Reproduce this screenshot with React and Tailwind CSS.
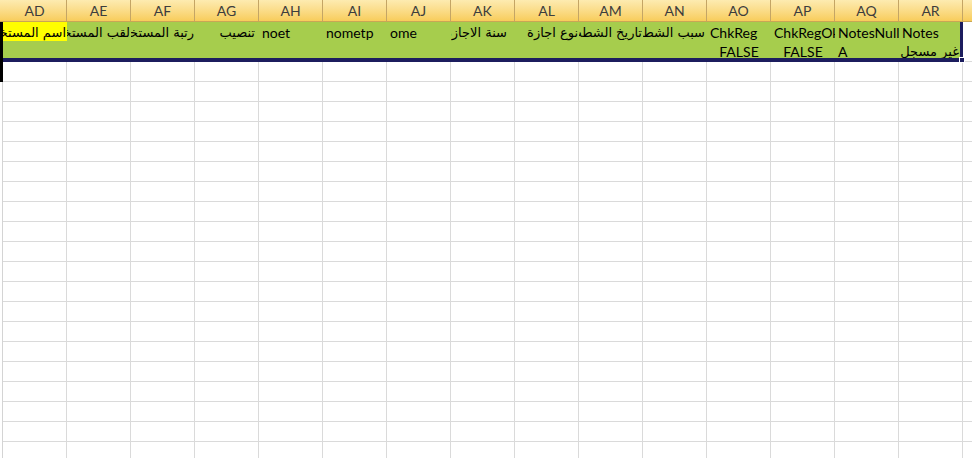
import React from "react";

const COLS = ["AD", "AE", "AF", "AG", "AH", "AI", "AJ", "AK", "AL", "AM", "AN", "AO", "AP", "AQ", "AR"];

// first line / second line of each cell in the green row
const CELLS = [
  { a: "اسم المستخدم", rtl: true, hl: true },
  { a: "لقب المستخدم", rtl: true },
  { a: "رتبة المستخدم", rtl: true },
  { a: "تنصيب", rtl: true, pr: "pr-[4px]" },
  { a: "noet" },
  { a: "nometp" },
  { a: "ome" },
  { a: "سنة الاجازة", rtl: true, pr: "pr-[8px]" },
  { a: "نوع اجازة", rtl: true },
  { a: "تاريخ الشطب", rtl: true },
  { a: "سبب الشطب", rtl: true, pr: "pr-[2px]" },
  { a: "ChkReg", b: "FALSE", bc: true },
  { a: "ChkRegOk", b: "FALSE", bc: true },
  { a: "NotesNull", b: "A" },
  { a: "Notes", b: "غير مسجل", brtl: true },
];

const latin = "font-['Lato','Liberation_Sans',sans-serif] text-[14px]";
const arabic = "font-['DejaVu_Sans',sans-serif] text-[13px]";

function Line({ text, rtl, center, hl, pr }) {
  if (!text) return <div className="h-[19px]" />;
  return (
    <div
      dir={rtl ? "rtl" : "ltr"}
      className={`h-[19px] overflow-hidden whitespace-nowrap leading-[21px] text-black ${
        rtl ? `${arabic} text-right ${pr || "pr-[1px]"}` : `${latin} ${center ? "text-center" : "pl-[3px]"}`
      } ${hl ? "bg-[#ffff00]" : ""}`}
    >
      {text}
    </div>
  );
}

export default function App() {
  const rows = Array.from({ length: 20 });

  return (
    <div className="w-[972px] h-[458px] overflow-hidden bg-white select-none">
      {/* column headers */}
      <div className="flex h-[22px] border-b border-[#c9a655] bg-gradient-to-b from-[#fdebb0] to-[#f8cd5a]">
        <div className="w-[3px]" />
        {COLS.map((c) => (
          <div
            key={c}
            className={`w-[64px] shrink-0 border-r border-[#c4a565] text-center leading-[21px] text-[#3d3d3d] ${latin}`}
          >
            {c}
          </div>
        ))}
        <div className="flex-1" />
      </div>

      {/* selected data row */}
      <div className="relative flex h-[40px]">
        <div className="w-[3px] bg-black" />
        <div className="flex w-[957px] flex-col">
          <div className="flex h-[36px] bg-[#a6cd4d]">
            {CELLS.map((c, i) => (
              <div key={i} className={`${i === 14 ? "w-[61px]" : "w-[64px]"} shrink-0 overflow-hidden`}>
                <Line text={c.a} rtl={c.rtl} hl={c.hl} pr={c.pr} />
                <Line text={c.b} rtl={c.brtl} center={c.bc} />
              </div>
            ))}
          </div>
          <div className="h-[4px] bg-[#1c1d5e]" />
        </div>
        <div className="w-[3px] bg-[#1c1d5e]" />
        <div className="flex-1 border-b border-[#dadada]" />
        <div className="absolute left-[959px] top-[35px] h-[6px] w-[6px] border border-white bg-[#1c1d5e]" />
      </div>

      {/* empty grid */}
      {rows.map((_, r) => (
        <div key={r} className="flex h-[20px]">
          <div className={`w-[3px] ${r === 0 ? "bg-black" : "border-r border-[#d4d4d4]"}`} />
          {COLS.map((c) => (
            <div key={c} className="w-[64px] shrink-0 border-r border-b border-[#dadada]" />
          ))}
          <div className="flex-1 border-b border-[#dadada]" />
        </div>
      ))}
    </div>
  );
}
